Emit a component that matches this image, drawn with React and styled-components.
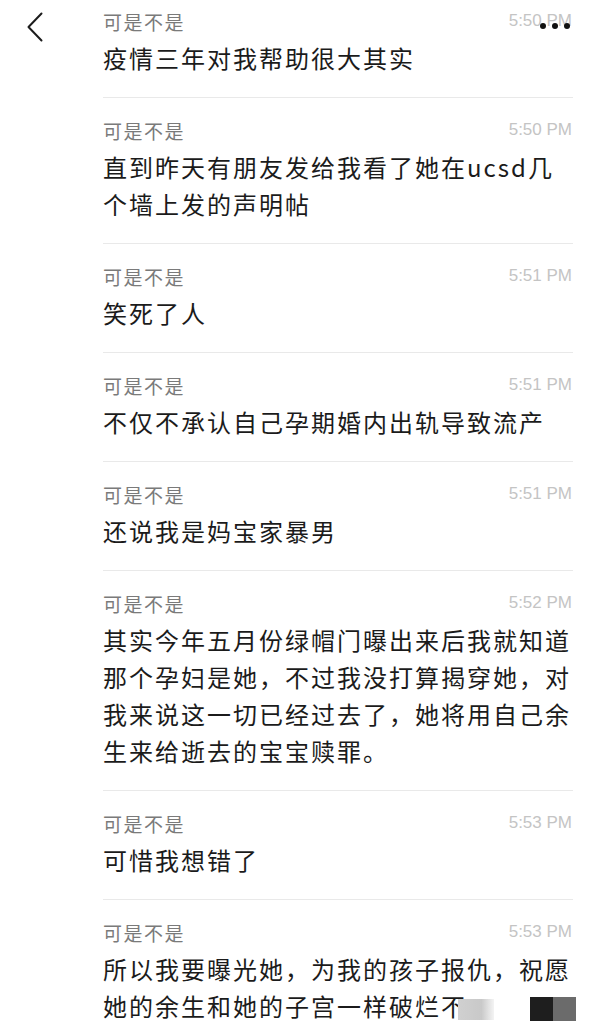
import styled, { createGlobalStyle } from "styled-components";

const GlobalStyle = createGlobalStyle`
  html, body {
    margin: 0;
    padding: 0;
    background: #ffffff;
  }
  body {
    font-family: "Noto Sans CJK SC", "Noto Sans", sans-serif;
  }
`;

const messages = [
  { time: "5:50 PM", text: "疫情三年对我帮助很大其实" },
  { time: "5:50 PM", text: "直到昨天有朋友发给我看了她在ucsd几个墙上发的声明帖" },
  { time: "5:51 PM", text: "笑死了人" },
  { time: "5:51 PM", text: "不仅不承认自己孕期婚内出轨导致流产" },
  { time: "5:51 PM", text: "还说我是妈宝家暴男" },
  {
    time: "5:52 PM",
    text: "其实今年五月份绿帽门曝出来后我就知道那个孕妇是她，不过我没打算揭穿她，对我来说这一切已经过去了，她将用自己余生来给逝去的宝宝赎罪。",
  },
  { time: "5:53 PM", text: "可惜我想错了" },
  {
    time: "5:53 PM",
    text: "所以我要曝光她，为我的孩子报仇，祝愿她的余生和她的子宫一样破烂",
    tail: "不",
  },
];

const App = () => {
  return (
    <>
      <GlobalStyle />
      <Page>
        <BackButton aria-label="back">
          <svg width="18" height="30" viewBox="0 0 18 30">
            <path
              d="M15.5 1.5 L2.5 15 L15.5 28.5"
              fill="none"
              stroke="#1c1c1c"
              strokeWidth="2"
              strokeLinecap="round"
              strokeLinejoin="round"
            />
          </svg>
        </BackButton>
        <MoreButton aria-label="more">
          <Dot />
          <Dot />
          <Dot />
        </MoreButton>
        <List>
          {messages.map((m, i) => (
            <Item key={i} first={i === 0} last={i === messages.length - 1}>
              <Header>
                <Name>可是不是</Name>
                <Time>{m.time}</Time>
              </Header>
              <Text>
                {m.text}
                {m.tail && (
                  <Censored>
                    {m.tail}
                    <Smudge />
                    <Block tone="#1e1e1e" gap={36} />
                    <Block tone="#6b6b6b" gap={0} />
                  </Censored>
                )}
              </Text>
            </Item>
          ))}
        </List>
      </Page>
    </>
  );
};

export default App;

const Page = styled.div`
  position: relative;
  width: 600px;
  height: 1026px;
  overflow: hidden;
  background: #ffffff;
  padding-left: 103px;
  box-sizing: border-box;
`;

const BackButton = styled.div`
  position: absolute;
  left: 26px;
  top: 12px;
  width: 18px;
  height: 30px;
`;

const MoreButton = styled.div`
  position: absolute;
  left: 540px;
  top: 23px;
  display: flex;
  gap: 6px;
`;

const Dot = styled.span`
  width: 6px;
  height: 6px;
  border-radius: 50%;
  background: #111111;
`;

const List = styled.div`
  width: 470px;
  display: flex;
  flex-direction: column;
`;

const Item = styled.div`
  padding: ${(p) => (p.first ? "9px" : "20px")} 0 21px;
  border-bottom: ${(p) => (p.last ? "none" : "1px solid #e9e9e9")};
`;

const Header = styled.div`
  display: flex;
  justify-content: space-between;
  align-items: center;
  height: 24px;
  margin-bottom: 6px;
`;

const Name = styled.span`
  font-size: 19px;
  letter-spacing: 1.5px;
  color: #7a7a7a;
`;

const Time = styled.span`
  font-family: "Liberation Sans", Arial, sans-serif;
  font-size: 17px;
  color: #c4c4c4;
  padding-right: 1px;
`;

const Text = styled.div`
  font-size: 24px;
  line-height: 37px;
  letter-spacing: 2px;
  color: #1b1b1b;
  word-break: break-all;
`;

const Censored = styled.span`
  white-space: nowrap;
  margin-right: -14px;
`;

const Smudge = styled.span`
  display: inline-block;
  vertical-align: middle;
  width: 36px;
  height: 21px;
  margin-left: -9px;
  background: linear-gradient(90deg, #d0d0d0 0%, #c9c9c9 65%, #f4f4f4 100%);
  filter: blur(0.6px);
`;

const Block = styled.span`
  display: inline-block;
  vertical-align: middle;
  width: 23px;
  height: 24px;
  margin-left: ${(p) => p.gap}px;
  background: ${(p) => p.tone};
`;
